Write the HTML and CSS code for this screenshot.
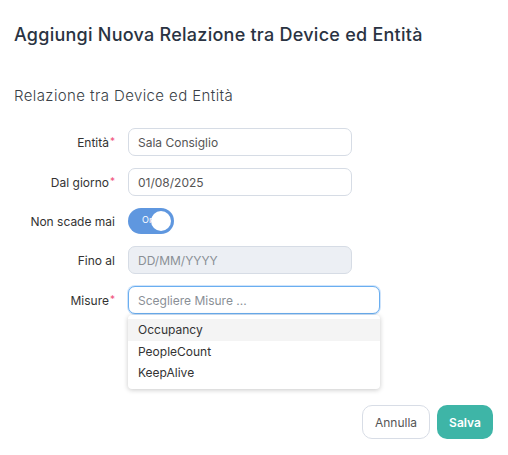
FILE: index.html
```html
<!DOCTYPE html>
<html lang="it">
<head>
    <meta charset="UTF-8">
    <title>Nuova Relazione</title>
    <link rel="stylesheet" href="styles.css">
</head>
<body>
    <div class="modal">
        <h2 class="modal-title">Aggiungi Nuova Relazione tra Device ed Entità</h2>

        <h3 class="section-title">Relazione tra Device ed Entità</h3>

        <div class="form">
            <div class="row">
                <label class="lbl">Entità<span class="req">*</span></label>
                <input class="field" type="text" value="Sala Consiglio">
            </div>
            <div class="row">
                <label class="lbl">Dal giorno<span class="req">*</span></label>
                <input class="field" type="text" value="01/08/2025">
            </div>
            <div class="row row-switch">
                <label class="lbl">Non scade mai</label>
                <div class="switch">
                    <span class="switch-text">On</span>
                    <span class="knob"></span>
                </div>
            </div>
            <div class="row">
                <label class="lbl">Fino al</label>
                <input class="field disabled" type="text" placeholder="DD/MM/YYYY" disabled>
            </div>
            <div class="row">
                <label class="lbl">Misure<span class="req">*</span></label>
                <div class="select-wrap">
                    <input class="field wide focus" type="text" placeholder="Scegliere Misure ...">
                    <ul class="dropdown">
                        <li class="active">Occupancy</li>
                        <li>PeopleCount</li>
                        <li>KeepAlive</li>
                    </ul>
                </div>
            </div>
        </div>

        <div class="footer">
            <button class="btn btn-cancel">Annulla</button>
            <button class="btn btn-save">Salva</button>
        </div>
    </div>
</body>
</html>
```

FILE: styles.css
```css
body {
    margin: 0;
    background: #fff;
    font-family: Inter, "Open Sans", sans-serif;
    color: #333;
}
.modal {
    width: 508px;
    height: 455px;
    box-sizing: border-box;
    padding: 24px 14px 0 14px;
}
.modal-title {
    margin: 0;
    font-size: 18px;
    font-weight: 500;
    letter-spacing: 0.25px;
    color: #2a3342;
    line-height: 22px;
}
.section-title {
    margin: 40px 0 0 0;
    font-size: 15px;
    font-weight: 300;
    letter-spacing: 0.4px;
    color: #3a3f47;
    line-height: 20px;
}
.form {
    margin-top: 22px;
    display: flex;
    flex-direction: column;
    gap: 12px;
}
.row {
    display: flex;
    align-items: center;
    height: 28px;
}
.row-switch {
    height: 26px;
}
.lbl {
    width: 101px;
    text-align: right;
    margin-right: 13px;
    font-size: 12px;
    color: #333;
}
.req {
    color: #f0527a;
    font-size: 10px;
    vertical-align: top;
    margin-left: 1px;
}
.field {
    box-sizing: border-box;
    width: 224px;
    height: 28px;
    border: 1px solid #d6dce5;
    border-radius: 7px;
    padding: 0 9px;
    font-family: inherit;
    font-size: 12px;
    color: #555;
    outline: none;
}
.field::placeholder {
    color: #8a8f96;
}
.field.disabled {
    background: #eceff4;
}
.field.wide {
    width: 252px;
}
.field.focus {
    border-color: #6aaef0;
    box-shadow: 0 0 0 1px #cfe4fb;
}
.switch {
    position: relative;
    width: 46px;
    height: 26px;
    border-radius: 13px;
    background: #5f97df;
}
.switch-text {
    position: absolute;
    left: 14px;
    top: 6px;
    font-size: 9px;
    color: #fff;
}
.knob {
    position: absolute;
    right: 3px;
    top: 3px;
    width: 20px;
    height: 20px;
    border-radius: 50%;
    background: #fff;
}
.select-wrap {
    position: relative;
}
.dropdown {
    position: absolute;
    left: 0;
    top: 29px;
    width: 252px;
    box-sizing: border-box;
    margin: 0;
    padding: 4px 0 6px 0;
    list-style: none;
    background: #fff;
    border-radius: 4px;
    box-shadow: 0 1px 5px rgba(0, 0, 0, 0.22);
}
.dropdown li {
    padding: 0 10px;
    height: 21px;
    line-height: 21px;
    font-size: 12px;
    color: #333;
}
.dropdown li.active {
    background: #f4f4f4;
    height: 22px;
    line-height: 22px;
}
.footer {
    display: flex;
    justify-content: flex-end;
    gap: 7px;
    margin-top: 91px;
    padding-right: 1px;
}
.btn {
    height: 34px;
    border-radius: 10px;
    font-family: inherit;
    font-size: 12px;
    padding: 0 12px;
}
.btn-cancel {
    background: #fff;
    border: 1px solid #d8dde6;
    color: #555;
    width: 68px;
}
.btn-save {
    background: #3eb5a7;
    border: none;
    color: #fff;
    font-weight: 600;
    width: 56px;
}
```
